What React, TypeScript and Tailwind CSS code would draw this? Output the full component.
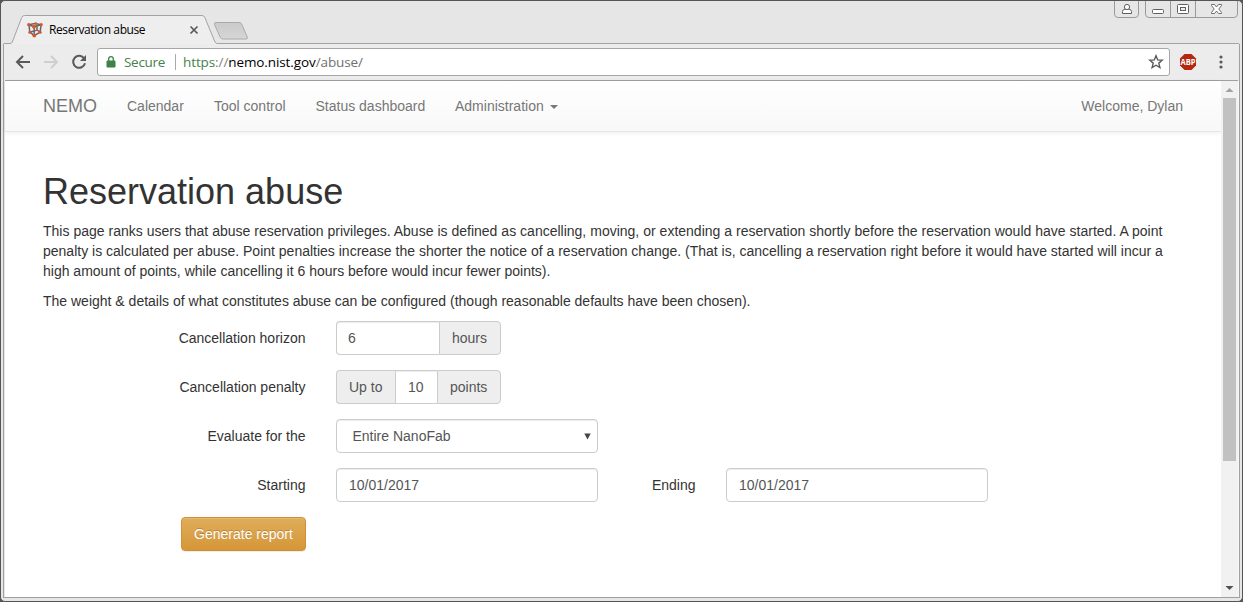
import React from "react";

const UI = "font-['Open_Sans','Noto_Sans',sans-serif]";

function Favicon() {
  return (
    <svg width="16" height="16" viewBox="0 0 16 16" className="shrink-0">
      <path d="M1.7 2.7 L7 4.8 L14 2.7 M1.7 2.7 L8 1.5 L14 2.7 M2 3 L2.8 10.2 M14 3 L13.2 10.2 M7.2 4.8 V13.6 M2.8 10.2 L7.3 13.5 L13.2 10.2 M2.8 10.2 L10 8 L13.2 10.2 M10 2 V8" fill="none" stroke="#66666a" strokeWidth="1.5" />
      <g fill="#d9582b">
        <circle cx="1.7" cy="2.7" r="1.6" /><circle cx="14.2" cy="2.7" r="1.6" /><circle cx="8.8" cy="1.5" r="1.2" />
        <circle cx="7" cy="4.8" r="2" /><circle cx="2.8" cy="10.2" r="1.5" /><circle cx="13.2" cy="10.2" r="1.5" />
        <circle cx="7.3" cy="13.6" r="1.9" /><circle cx="10" cy="8.2" r="0.9" />
      </g>
    </svg>
  );
}

function TitleBar() {
  return (
    <div className="relative flex h-[43px] shrink-0 justify-between">
      <svg width="1241" height="43" viewBox="1 1 1241 43" className="absolute inset-0">
        <defs>
          <linearGradient id="newtab" x1="0" y1="0" x2="0" y2="1">
            <stop offset="0" stopColor="#cacaca" /><stop offset="1" stopColor="#d6d6d6" />
          </linearGradient>
        </defs>
        <path d="M3.5 43.5 H10 Q11.7 43.5 12.3 42 L21.7 17.5 Q22.5 15.5 24.5 15.5 H202 Q204 15.5 204.8 17.5 L215 42 Q215.7 43.5 217.5 43.5 V45 H3.5 Z" fill="#eeeeee" />
        <path d="M3.5 43.5 H10 Q11.7 43.5 12.3 42 L21.7 17.5 Q22.5 15.5 24.5 15.5 H202 Q204 15.5 204.8 17.5 L215 42 Q215.7 43.5 217.5 43.5 H1239" fill="none" stroke="#a3a3a3" />
        <path d="M216 22.5 H239 Q241 22.5 241.8 24.3 L247.2 37 Q248 39 246 39 H223 Q221 39 220.2 37.2 L214.5 24.5 Q213.8 22.5 216 22.5 Z" fill="url(#newtab)" stroke="#aaa" />
      </svg>
      <div className="relative mt-[15px] flex h-7 items-center pl-[26px]">
        <Favicon />
        <span className={`${UI} ml-[6px] w-[140px] text-[12px] tracking-[-0.4px] text-black`}>Reservation abuse</span>
        <svg width="10" height="10" viewBox="0 0 10 10"><path d="M1.5 1.5 L8.5 8.5 M8.5 1.5 L1.5 8.5" stroke="#5a5a5a" strokeWidth="1.7" /></svg>
      </div>
      <svg width="126" height="18" viewBox="1113 1 126 18" className="relative mr-[3px]" fill="none" stroke="#9a9a9a">
        <path d="M1114.5 1 V14 Q1114.5 17.5 1118 17.5 H1135 Q1138.5 17.5 1138.5 14 V1 M1145.5 1 V14 Q1145.5 17.5 1149 17.5 H1234 Q1237.5 17.5 1237.5 14 V1 M1170.5 1 V17 M1195.5 1 V17" />
        <g stroke="#606060">
          <path d="M1122.5 13.5 V11.5 Q1122.5 9.5 1125 9.2 H1129 Q1131.5 9.5 1131.5 11.5 V13.5 Z" fill="#fff" />
          <circle cx="1127" cy="7" r="2.6" fill="#fff" />
          <rect x="1152.5" y="9.5" width="11" height="4" rx="1" fill="#fff" />
          <rect x="1177.5" y="4.5" width="11" height="9" rx="1" fill="#fff" /><rect x="1180.5" y="7.5" width="5" height="3" fill="#eee" />
          <path d="M1211.5 4.5 H1214.5 L1216.5 7 L1218.5 4.5 H1221.5 V5.5 L1218.8 9 L1221.5 12.5 V13.5 H1218.5 L1216.5 11 L1214.5 13.5 H1211.5 V12.5 L1214.2 9 L1211.5 5.5 Z" fill="#fff" strokeWidth="0.9" />
        </g>
      </svg>
    </div>
  );
}

function Toolbar() {
  return (
    <div className="mx-[2px] flex h-[37px] shrink-0 border-x border-[#a0a0a0] bg-[#ececec]">
      <div className="mx-px flex flex-1 items-center border-b border-[#a0a0a0] pl-[10px]">
        <svg width="72" height="18" viewBox="15 53 72 18" fill="none" strokeWidth="2" className="shrink-0">
          <path d="M30 62 H17.5 M23 56 L17 62 L23 68" stroke="#5a5a5a" />
          <path d="M44 62 H56.5 M51 56 L57 62 L51 68" stroke="#cfcfcf" />
          <path d="M84.2 58.5 A6 6 0 1 0 85 63.2" stroke="#5a5a5a" />
          <path d="M86 55 V61 H80 Z" fill="#5a5a5a" stroke="none" />
        </svg>
        <div className={`${UI} ml-[10px] flex h-7 w-[1073px] items-center rounded-[3px] border border-[#a6a6a6] bg-white`}>
          <svg width="10" height="12" viewBox="0 0 10 12" className="ml-2"><path d="M1 5 H9 V11 H1 Z" fill="#3f8247" stroke="#3f8247" strokeLinejoin="round" /><path d="M2.7 5 V3 A2.3 2.3 0 0 1 7.3 3 V5" fill="none" stroke="#3f8247" strokeWidth="1.3" /></svg>
          <span className="ml-2 w-[43px] whitespace-nowrap text-[13.5px] tracking-[-0.3px] text-[#44814b]">Secure</span>
          <span className="ml-2 h-4 w-px bg-[#aaa]" />
          <span className="ml-[7px] whitespace-nowrap text-[13.5px] tracking-[-0.1px] text-black"><span className="text-[#44814b]">https</span><span className="text-[#808080]">://</span>nemo.nist.gov<span className="text-[#707070]">/abuse/</span></span>
          <svg width="16" height="16" viewBox="0 0 16 16" className="ml-auto mr-[5px]"><path d="M8 1.7 L9.7 5.9 L14.2 6.2 L10.8 9.1 L11.9 13.6 L8 11.2 L4.1 13.6 L5.2 9.1 L1.8 6.2 L6.3 5.9 Z" fill="none" stroke="#5a5a5a" strokeWidth="1.4" /></svg>
        </div>
        <svg width="18" height="18" viewBox="0 0 18 18" className="ml-[9px]">
          <path d="M5.5 1 H12.5 L17 5.5 V12.5 L12.5 17 H5.5 L1 12.5 V5.5 Z" fill="#b52711" />
          <text x="9" y="12" textAnchor="middle" fontSize="8.5" fontWeight="700" fontFamily="Open Sans" fill="#fff" textLength="15" lengthAdjust="spacingAndGlyphs">ABP</text>
        </svg>
        <svg width="4" height="14" viewBox="0 0 4 14" className="ml-[21.5px]" fill="#5a5a5a"><circle cx="2" cy="2" r="1.6" /><circle cx="2" cy="7" r="1.6" /><circle cx="2" cy="12" r="1.6" /></svg>
      </div>
    </div>
  );
}

const inner = "shadow-[inset_0_1px_1px_rgba(0,0,0,0.075)]";
const field = "h-[34px] border border-[#ccc] bg-white px-3 text-[#555] flex items-center";
const addon = "h-[34px] border border-[#ccc] bg-[#eee] px-3 text-[#555] flex items-center";

function Row({ label, children }: { label: string; children: React.ReactNode }) {
  return (
    <div className="mb-[15px] flex h-[34px] items-center">
      <span className="mr-[30px] w-[263px] pr-[0.5px] text-right">{label}</span>
      {children}
    </div>
  );
}

function Page() {
  return (
    <div className="flex-1 bg-white font-['Liberation_Sans',Arial,sans-serif] text-[14px] leading-5 text-[#333]">
      <nav className="flex h-[51px] items-center border-b border-[#e7e7e7] bg-linear-to-b from-white to-[#f8f8f8] px-[38px] text-[#777] shadow-[0_1px_5px_rgba(0,0,0,0.075)]">
        <span className="w-[84px] text-[18px]">NEMO</span>
        <span className="w-[87px]">Calendar</span>
        <span className="w-[101.5px]">Tool control</span>
        <span className="w-[139.5px]">Status dashboard</span>
        <span>Administration</span>
        <span className="ml-[6px] mt-[2px] border-x-4 border-t-4 border-x-transparent border-t-[#777]" />
        <span className="ml-auto">Welcome, Dylan</span>
      </nav>
      <main className="px-[38px] pt-10">
        <h1 className="mb-[10px] text-[36px] leading-[39px] font-medium">Reservation abuse</h1>
        <p className="mb-[10px] whitespace-nowrap">
          <span className="[word-spacing:0.07px]">This page ranks users that abuse reservation privileges. Abuse is defined as cancelling, moving, or extending a reservation shortly before the reservation would have started. A point</span><br />
          penalty is calculated per abuse. Point penalties increase the shorter the notice of a reservation change. (That is, cancelling a reservation right before it would have started will incur a<br />
          high amount of points, while cancelling it 6 hours before would incur fewer points).
        </p>
        <p className="mb-[10px]">The weight &amp; details of what constitutes abuse can be configured (though reasonable defaults have been chosen).</p>
        <Row label="Cancellation horizon">
          <div className={`${field} ${inner} w-[103px] rounded-l border-r-0 pl-[11px]`}>6</div>
          <div className={`${addon} w-[62px] rounded-r`}>hours</div>
        </Row>
        <Row label="Cancellation penalty">
          <div className={`${addon} w-[59px] rounded-l border-r-0`}>Up to</div>
          <div className={`${field} ${inner} w-[42px] border-r-0`}>10</div>
          <div className={`${addon} w-[64px] rounded-r`}>points</div>
        </Row>
        <Row label="Evaluate for the">
          <div className={`${field} ${inner} w-[262px] justify-between rounded pl-[15.5px] pr-[6px]`}>
            Entire NanoFab
            <svg width="7" height="7" viewBox="0 0 7 7"><path d="M0.3 0.5 H6.7 L3.5 6.5 Z" fill="#444" /></svg>
          </div>
        </Row>
        <Row label="Starting">
          <div className={`${field} ${inner} w-[262px] rounded`}>10/01/2017</div>
          <span className="mr-[30px] w-[98px] pr-[0.5px] text-right">Ending</span>
          <div className={`${field} ${inner} w-[262px] rounded`}>10/01/2017</div>
        </Row>
        <button className="ml-[138px] flex h-[34px] w-[125px] items-center justify-center rounded border border-[#d08f36] bg-linear-to-b from-[#e0ad5a] to-[#d59636] text-white shadow-[inset_0_1px_0_rgba(255,255,255,0.15),0_1px_1px_rgba(0,0,0,0.075)] [text-shadow:0_-1px_0_rgba(0,0,0,0.2)]">Generate report</button>
      </main>
    </div>
  );
}

export default function App() {
  return (
    <div className="h-[602px] w-[1243px] overflow-hidden bg-[#555]">
      <div className="flex h-full flex-col overflow-hidden rounded-[5px] border border-[#555] bg-[#e6e6e6]">
        <TitleBar />
        <Toolbar />
        <div className="mx-[2px] mb-[3px] flex min-h-0 flex-1 border-x border-b border-[#a0a0a0] pl-px">
          <Page />
          <div className="flex w-[18px] shrink-0 flex-col items-center border-r border-[#f8f8f8] bg-[#f1f1f1]">
            <svg width="9" height="17" viewBox="0 0 9 17"><path d="M0.5 11 L4.5 7 L8.5 11 Z" fill="#a0a0a0" /></svg>
            <div className="h-[363px] w-[13px] bg-[#c1c1c1]" />
            <svg width="9" height="17" viewBox="0 0 9 17" className="mt-auto"><path d="M0.5 6 H8.5 L4.5 10 Z" fill="#505050" /></svg>
          </div>
        </div>
      </div>
    </div>
  );
}
